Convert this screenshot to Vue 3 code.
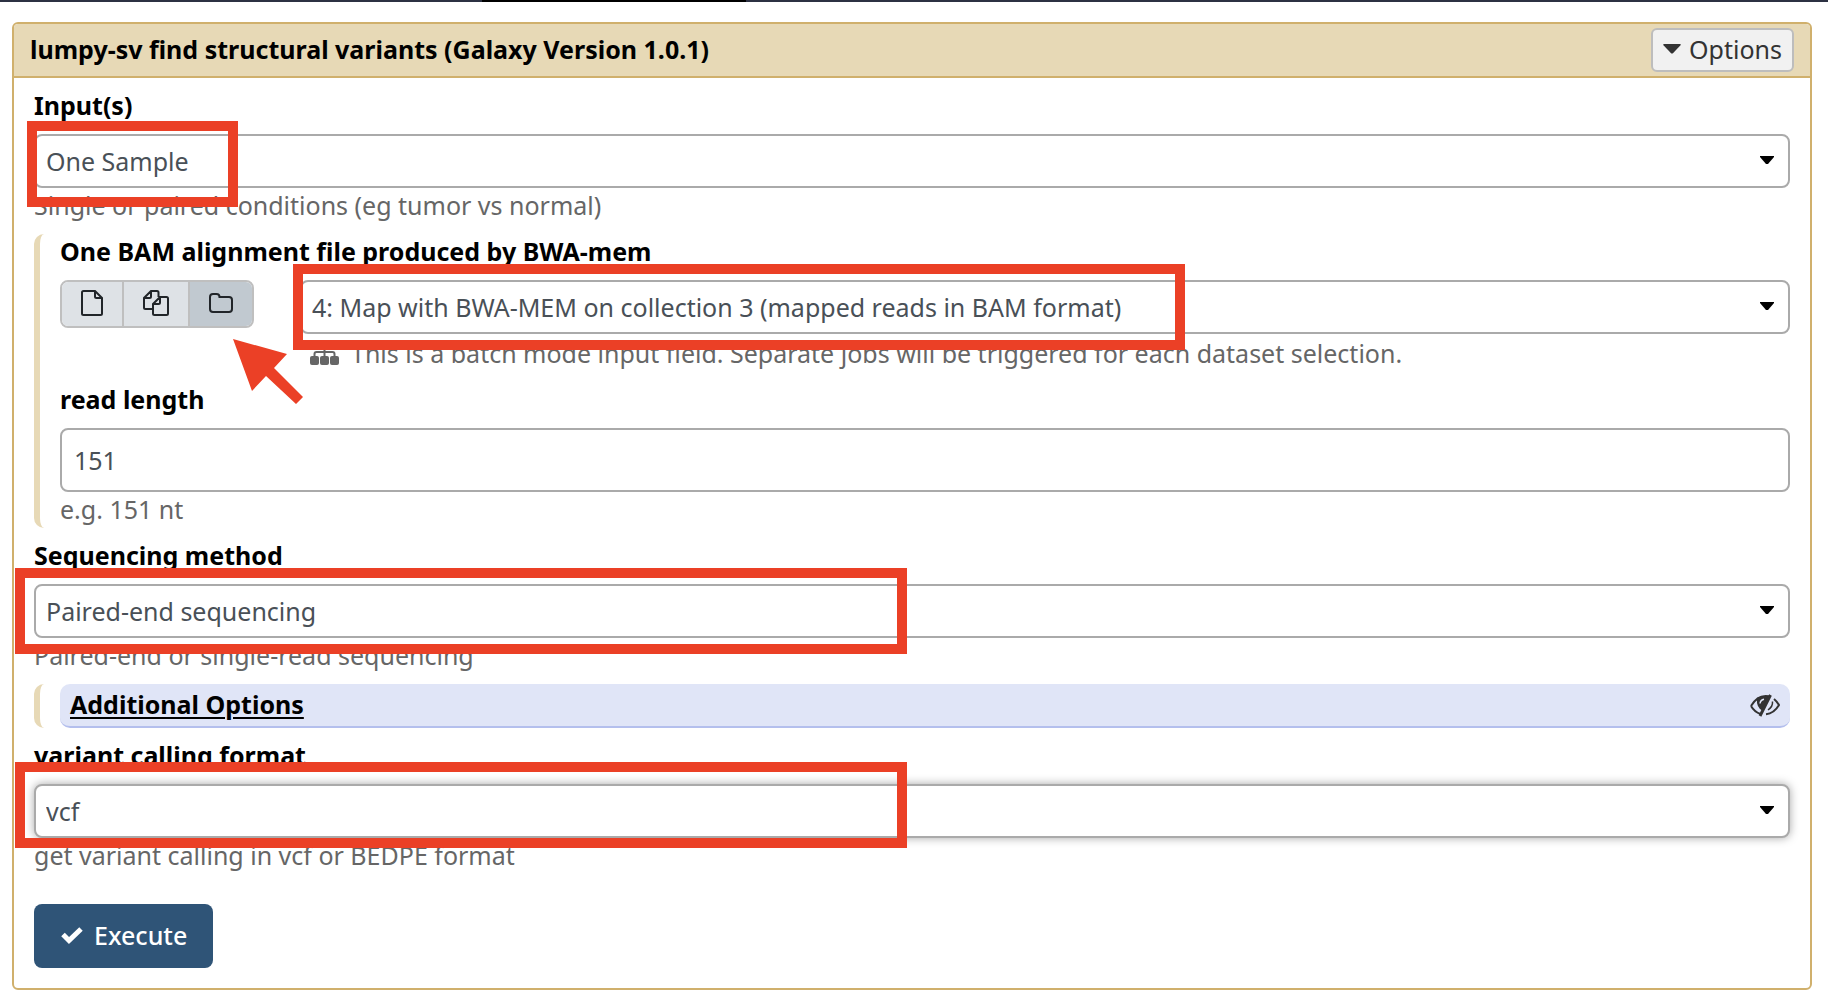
<script setup>
import { ref } from 'vue'

const inputs = ref('One Sample')
const dataset = ref('4: Map with BWA-MEM on collection 3 (mapped reads in BAM format)')
const readLength = ref('151')
const method = ref('Paired-end sequencing')
const format = ref('vcf')
const source = ref('collection')
</script>

<template>
  <div class="page">
    <div class="masthead"><span class="masthead-active"></span></div>

    <main class="panel">
      <header class="panel-header">
        <h1 class="title">lumpy-sv find structural variants (Galaxy Version 1.0.1)</h1>
        <button class="options" type="button">
          <svg width="18" height="10" viewBox="0 0 18 10" aria-hidden="true"><path d="M1 0h16q1.500 0 .5 1.200L10.200 9q-1.200 1.200-2.400 0L.5 1.200Q-.5 0 1 0z" fill="#333" /></svg>
          Options
        </button>
      </header>

      <form class="panel-body" @submit.prevent>
        <div class="field">
          <label class="label" for="inputs">Input(s)</label>
          <div class="control">
            <select id="inputs" v-model="inputs"><option>One Sample</option></select>
            <svg class="caret" viewBox="0 0 14 8" aria-hidden="true"><path d="M0 0h14v1L8 8H6L0 1z" /></svg>
            <span class="mark mark-sample"></span>
          </div>
          <p class="help">Single or paired conditions (eg tumor vs normal)</p>
        </div>

        <section class="section">
          <div class="field">
            <label class="label" for="dataset">One BAM alignment file produced by BWA-mem</label>
            <div class="data-row">
              <div class="sources">
                <button type="button" class="source" aria-label="Single dataset" :class="{ active: source === 'single' }" @click="source = 'single'">
                  <svg width="22" height="26" viewBox="0 0 22 26" aria-hidden="true"><path d="M1 2.500Q1 1 2.500 1H14l7 7v15.500q0 1.500-1.500 1.500h-17Q1 25 1 23.500zM14 1v5.500Q14 8 15.500 8H21" /></svg>
                </button>
                <button type="button" class="source" aria-label="Multiple datasets" :class="{ active: source === 'multiple' }" @click="source = 'multiple'">
                  <svg width="26" height="26" viewBox="0 0 26 26" aria-hidden="true"><path d="M9 19H2.500Q1 19 1 17.500V8l7-7h6q1.500 0 1.500 1.500V7M8 1v5.500Q8 8 6.500 8H1M10 14l7-7h6.500Q25 7 25 8.500v15q0 1.500-1.500 1.500h-12Q10 25 10 23.500zM17 7v5.500q0 1.500-1.500 1.500H10" /></svg>
                </button>
                <button type="button" class="source" aria-label="Dataset collection" :class="{ active: source === 'collection' }" @click="source = 'collection'">
                  <svg width="24" height="20" viewBox="0 0 24 20" aria-hidden="true"><path d="M1 4q0-3 3-3h3.500q3 0 3 3h9.500q3 0 3 3v9q0 3-3 3H4q-3 0-3-3z" /></svg>
                </button>
                <svg class="arrow" width="71" height="66" viewBox="0 0 71 66" aria-hidden="true"><path d="M0 0l54 15-13 14 29 29-7 7-30-28-14 15z" /></svg>
              </div>
              <div class="data-control">
                <div class="control">
                  <select id="dataset" v-model="dataset"><option>4: Map with BWA-MEM on collection 3 (mapped reads in BAM format)</option></select>
                  <svg class="caret" viewBox="0 0 14 8" aria-hidden="true"><path d="M0 0h14v1L8 8H6L0 1z" /></svg>
                  <span class="mark mark-data"></span>
                </div>
                <p class="help batch">
                  <svg width="29" height="26" viewBox="0 0 29 26" aria-hidden="true">
                    <rect x="10" y="0" width="9" height="8" rx="2" />
                    <rect x="0" y="16" width="9" height="9" rx="2" />
                    <rect x="10" y="16" width="9" height="9" rx="2" />
                    <rect x="20" y="16" width="9" height="9" rx="2" />
                    <path d="M14.500 7v10M4.500 17v-3q0-2 2-2h16q2 0 2 2v3" fill="none" stroke="#666" stroke-width="2" />
                  </svg>
                  This is a batch mode input field. Separate jobs will be triggered for each dataset selection.
                </p>
              </div>
            </div>
          </div>
          <div class="field">
            <label class="label" for="read-length">read length</label>
            <input id="read-length" v-model="readLength" class="text-input" type="text">
            <p class="help">e.g. 151 nt</p>
          </div>
        </section>

        <div class="field">
          <label class="label" for="method">Sequencing method</label>
          <div class="control">
            <select id="method" v-model="method"><option>Paired-end sequencing</option></select>
            <svg class="caret" viewBox="0 0 14 8" aria-hidden="true"><path d="M0 0h14v1L8 8H6L0 1z" /></svg>
            <span class="mark mark-method"></span>
          </div>
          <p class="help">Paired-end or single-read sequencing</p>
        </div>

        <section class="section">
          <div class="portlet">
            <a class="portlet-link" href="#">Additional Options</a>
            <svg width="30" height="23" viewBox="0 0 30 23" aria-hidden="true">
              <path d="M1 12Q7 2 15.500 2L19 2.300M1 12q3.500 6 9.500 8M24 5q3 2.500 5 6-5 8.500-13 9.200" fill="none" stroke="#333" stroke-width="2" />
              <path d="M7 4Q12 1 19 2.300L13 17Q6 14 7 4z" fill="#333" />
              <path d="M10 9.500q.5-3.500 4-4.200" fill="none" stroke="#e0e5f7" stroke-width="1.500" />
              <path d="M20.500 1L10 22" fill="none" stroke="#333" stroke-width="3" />
              <path d="M22.500 7.500q.5 5-4.500 8.500" fill="none" stroke="#333" stroke-width="1.500" />
            </svg>
          </div>
        </section>

        <div class="field">
          <label class="label" for="format">variant calling format</label>
          <div class="control">
            <select id="format" v-model="format" class="focused"><option>vcf</option></select>
            <svg class="caret" viewBox="0 0 14 8" aria-hidden="true"><path d="M0 0h14v1L8 8H6L0 1z" /></svg>
            <span class="mark mark-format"></span>
          </div>
          <p class="help">get variant calling in vcf or BEDPE format</p>
        </div>

        <button class="execute" type="submit">
          <svg width="24" height="18" viewBox="0 0 24 18" aria-hidden="true"><path d="M3 8.500l6 6L21 3" fill="none" stroke="#fff" stroke-width="5" /></svg>
          Execute
        </button>
      </form>
    </main>
  </div>
</template>

<style>
body {
  background: #fff;
}
</style>

<style scoped>
.page,
.page * {
  box-sizing: border-box;
}
.page {
  font-family: "Noto Sans", "Open Sans", sans-serif;
  font-size: 25px;
  line-height: 34px;
  color: #000;
}
.page button,
.page select,
.page input {
  font: inherit;
}
.page svg {
  flex: none;
}
.masthead {
  height: 2px;
  background: #2c3143;
  padding-left: 482px;
}
.masthead-active {
  display: block;
  width: 264px;
  height: 2px;
  background: #000;
}
.panel {
  margin: 20px 16px 8px 12px;
  border: 2px solid #d0b06c;
  border-radius: 6px;
}
.panel-header {
  display: flex;
  align-items: center;
  justify-content: space-between;
  height: 54px;
  padding: 0 16px;
  background: #e7d9b6;
  border-bottom: 2px solid #d0b06c;
  border-radius: 4px 4px 0 0;
}
.title {
  margin: 0;
  padding-bottom: 2px;
  font-size: 25px;
  font-weight: 700;
}
.page .options {
  display: flex;
  align-items: center;
  gap: 8px;
  height: 44px;
  padding: 0 10px 2px;
  color: #333;
  background: #f1f1f1;
  border: 2px solid #bdbdbd;
  border-radius: 6px;
}
.panel-body {
  display: flex;
  flex-direction: column;
  gap: 10px;
  padding: 10px 20px 20px;
}
.label {
  display: block;
  margin-bottom: 12px;
  font-weight: 700;
}
.help {
  margin: 0;
  padding-bottom: 2px;
  color: #666;
}
.control {
  position: relative;
}
.control select,
.text-input {
  display: block;
  width: 100%;
  margin: 0;
  color: #495057;
  background: #fff;
  border: 2px solid #aaa;
  border-radius: 8px;
}
.control select {
  height: 54px;
  padding: 0 44px 0 10px;
  appearance: none;
}
.control select.focused {
  box-shadow: 0 0 10px rgba(0, 0, 0, 0.35);
}
.text-input {
  height: 64px;
  padding: 0 12px;
}
.caret {
  position: absolute;
  top: 22px;
  right: 16px;
  width: 14px;
  height: 8px;
  pointer-events: none;
}
.mark {
  position: absolute;
  z-index: 1;
  height: 86px;
  border: 10px solid #eb4026;
  pointer-events: none;
}
.mark-sample {
  top: -13px;
  left: -7px;
  width: 211px;
}
.mark-data {
  top: -16px;
  left: -7px;
  width: 892px;
}
.mark-method {
  top: -16px;
  left: -19px;
  width: 892px;
}
.mark-format {
  top: -22px;
  left: -19px;
  width: 892px;
}
.section {
  display: flex;
  flex-direction: column;
  gap: 10px;
  padding-left: 20px;
  border-left: 6px solid #e7d9b6;
  border-radius: 10px 0 0 10px;
}
.data-row {
  display: flex;
  align-items: flex-start;
  gap: 46px;
}
.sources {
  position: relative;
  display: flex;
  border: 2px solid #bfbfbf;
  border-radius: 8px;
}
.source {
  display: flex;
  align-items: center;
  justify-content: center;
  width: 62px;
  height: 44px;
  margin: 0;
  padding: 0 0 2px;
  background: #dee2e6;
  border: 0;
  border-right: 2px solid #bfbfbf;
}
.source:first-child {
  border-radius: 6px 0 0 6px;
}
.source:nth-child(2) {
  width: 66px;
}
.source:nth-child(3) {
  border-right: 0;
  border-radius: 0 6px 6px 0;
}
.source.active {
  background: #c1c9d0;
}
.source svg {
  fill: none;
  stroke: #212529;
  stroke-width: 2;
}
.arrow {
  position: absolute;
  z-index: 1;
  top: 57px;
  left: 171px;
  fill: #eb4026;
}
.data-control {
  flex: 1;
  min-width: 0;
}
.batch {
  display: flex;
  align-items: center;
  gap: 12px;
  padding: 2px 0 2px 10px;
}
.batch svg {
  fill: #666;
}
.portlet {
  display: flex;
  align-items: center;
  justify-content: space-between;
  height: 44px;
  padding: 0 10px;
  background: #e0e5f7;
  border-bottom: 2px solid #b4bfed;
  border-radius: 10px;
}
.portlet-link {
  padding-bottom: 2px;
  color: #000;
  font-weight: 700;
  text-decoration-thickness: 2px;
  text-underline-offset: 3px;
}
.page .execute {
  display: flex;
  align-items: center;
  align-self: flex-start;
  gap: 10px;
  height: 64px;
  margin-top: 20px;
  padding: 0 26px 2px;
  color: #fff;
  font-weight: 500;
  background: #2f5477;
  border: 0;
  border-radius: 8px;
}
</style>
